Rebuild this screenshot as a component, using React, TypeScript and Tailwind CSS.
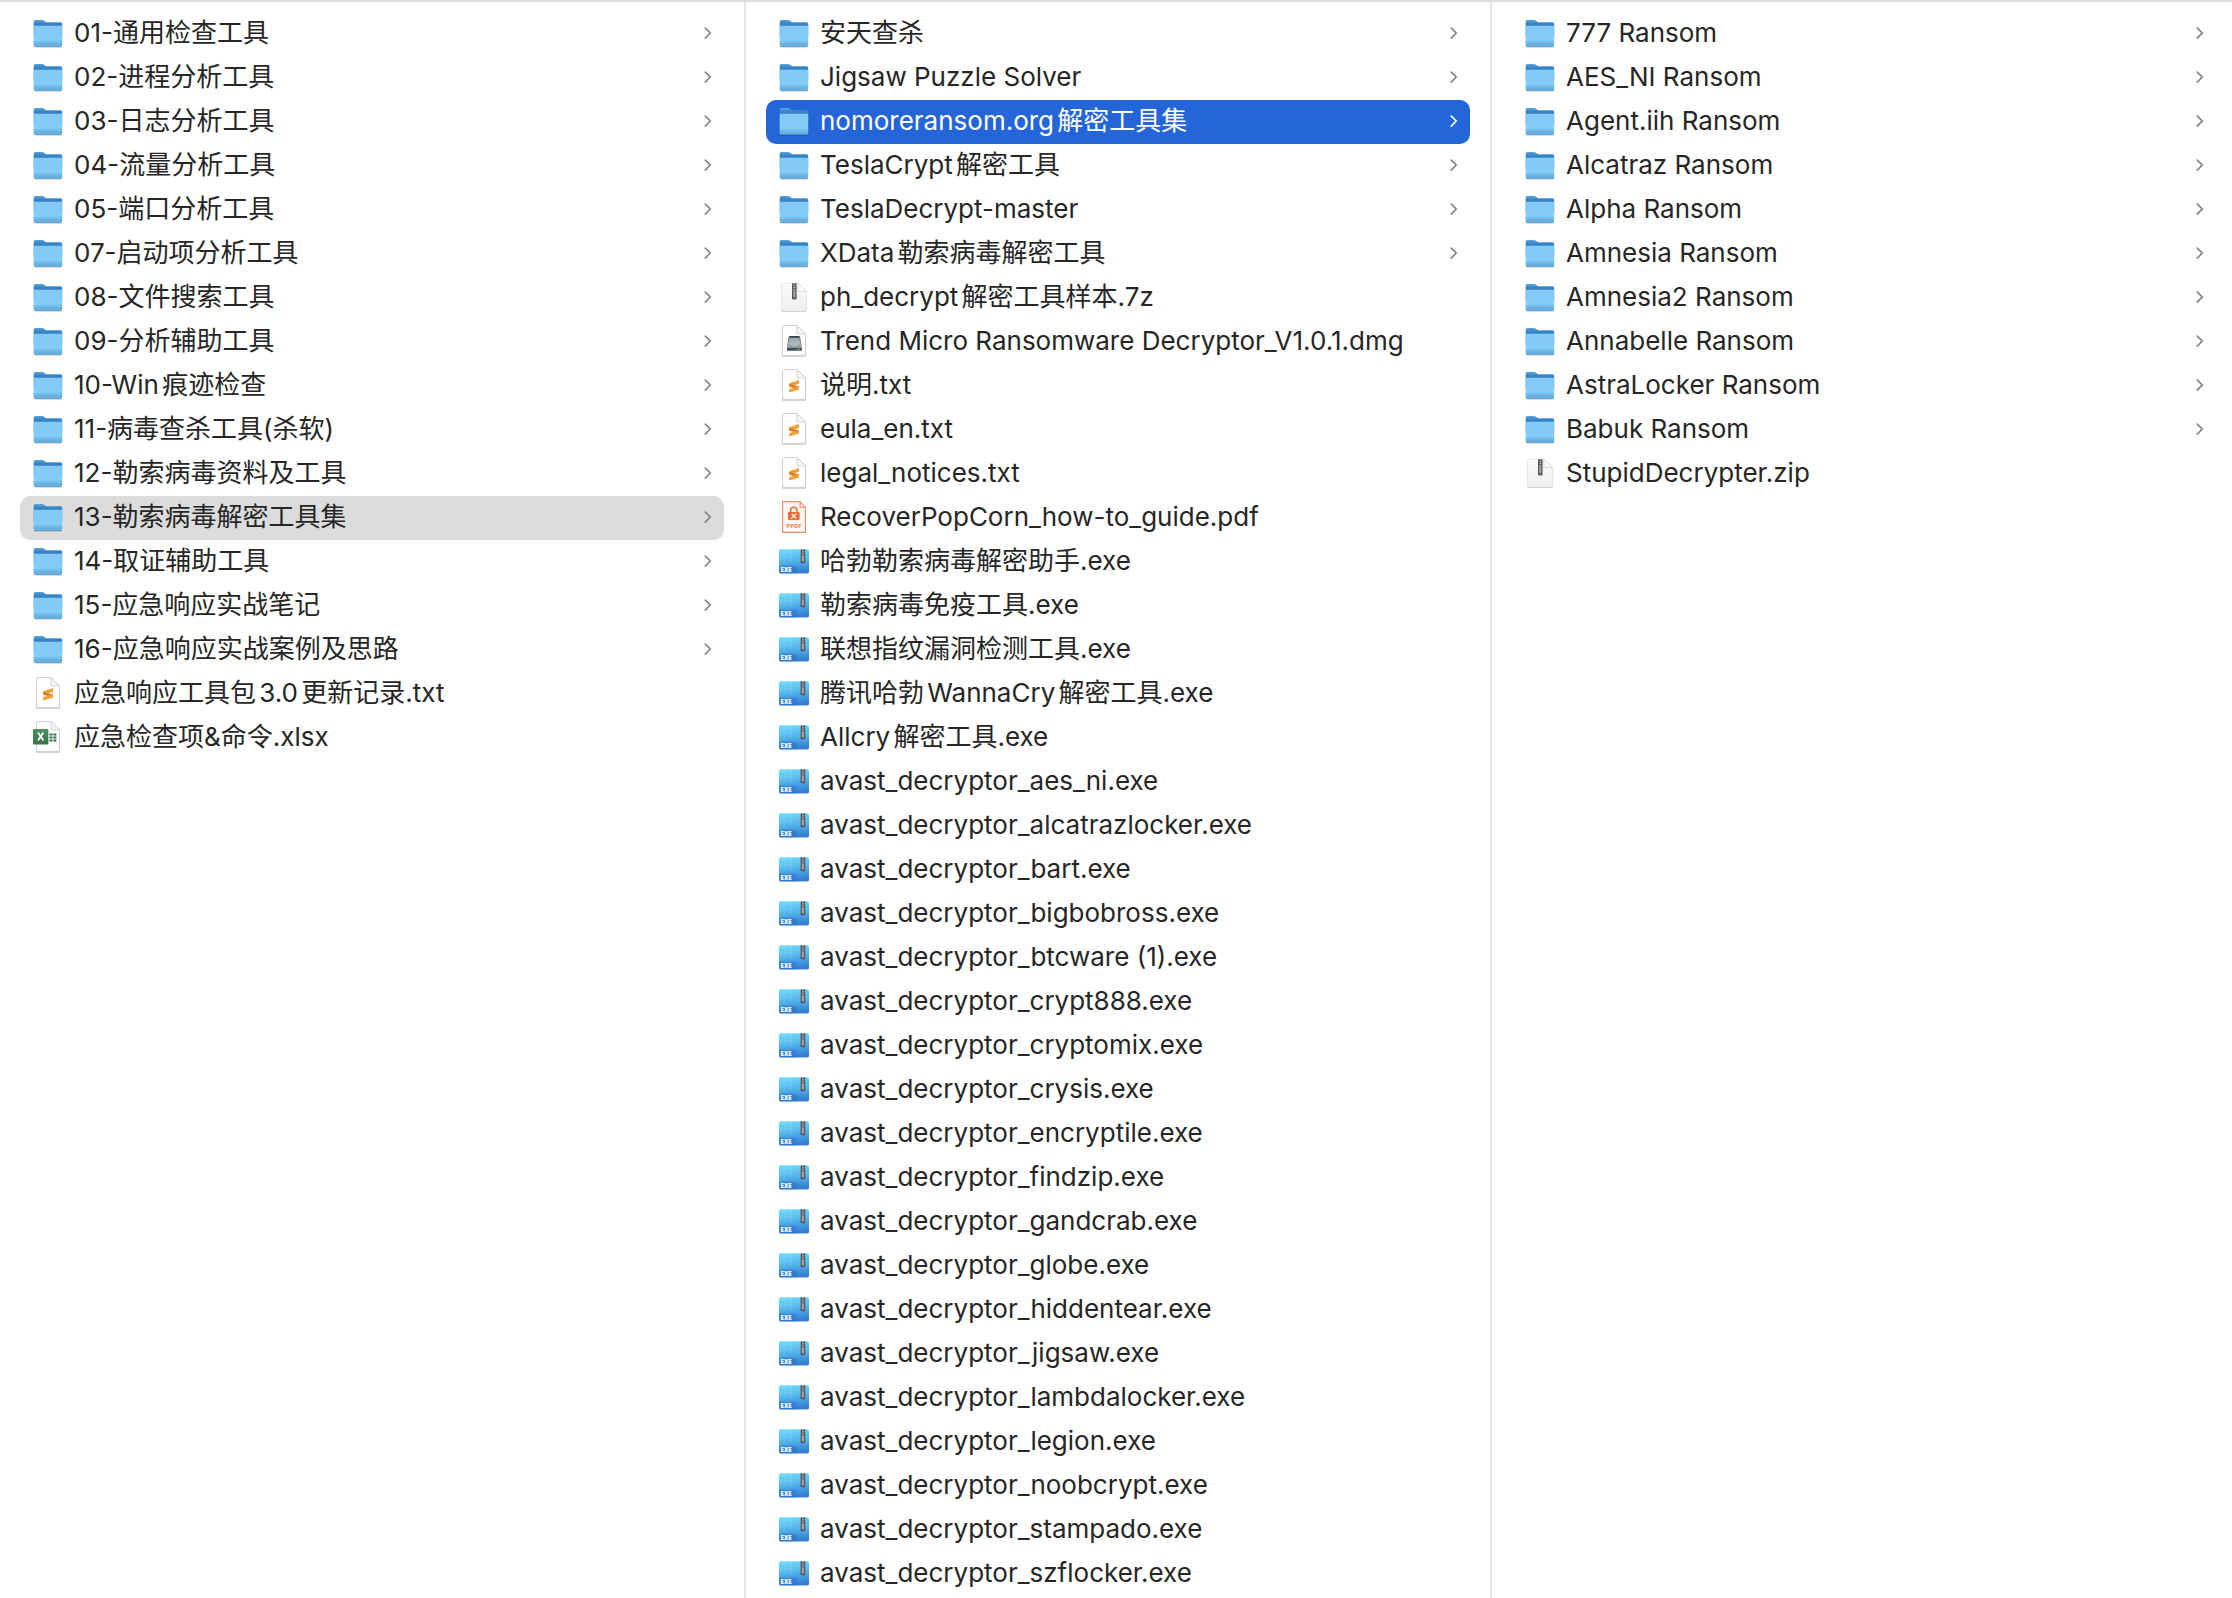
type Kind = "folder" | "zip" | "dmg" | "txt" | "pdf" | "exe" | "xlsx";

type Entry = {
  name: string;
  kind: Kind;
};

const folder = (name: string): Entry => ({ name, kind: "folder" });
const exe = (name: string): Entry => ({ name, kind: "exe" });

const toolkit: Entry[] = [
  folder("01-通用检查工具"),
  folder("02-进程分析工具"),
  folder("03-日志分析工具"),
  folder("04-流量分析工具"),
  folder("05-端口分析工具"),
  folder("07-启动项分析工具"),
  folder("08-文件搜索工具"),
  folder("09-分析辅助工具"),
  folder("10-Win痕迹检查"),
  folder("11-病毒查杀工具(杀软)"),
  folder("12-勒索病毒资料及工具"),
  folder("13-勒索病毒解密工具集"),
  folder("14-取证辅助工具"),
  folder("15-应急响应实战笔记"),
  folder("16-应急响应实战案例及思路"),
  { name: "应急响应工具包3.0更新记录.txt", kind: "txt" },
  { name: "应急检查项&命令.xlsx", kind: "xlsx" },
];

const decryptors: Entry[] = [
  folder("安天查杀"),
  folder("Jigsaw Puzzle Solver"),
  folder("nomoreransom.org解密工具集"),
  folder("TeslaCrypt解密工具"),
  folder("TeslaDecrypt-master"),
  folder("XData勒索病毒解密工具"),
  { name: "ph_decrypt解密工具样本.7z", kind: "zip" },
  { name: "Trend Micro Ransomware Decryptor_V1.0.1.dmg", kind: "dmg" },
  { name: "说明.txt", kind: "txt" },
  { name: "eula_en.txt", kind: "txt" },
  { name: "legal_notices.txt", kind: "txt" },
  { name: "RecoverPopCorn_how-to_guide.pdf", kind: "pdf" },
  exe("哈勃勒索病毒解密助手.exe"),
  exe("勒索病毒免疫工具.exe"),
  exe("联想指纹漏洞检测工具.exe"),
  exe("腾讯哈勃WannaCry解密工具.exe"),
  exe("Allcry解密工具.exe"),
  exe("avast_decryptor_aes_ni.exe"),
  exe("avast_decryptor_alcatrazlocker.exe"),
  exe("avast_decryptor_bart.exe"),
  exe("avast_decryptor_bigbobross.exe"),
  exe("avast_decryptor_btcware (1).exe"),
  exe("avast_decryptor_crypt888.exe"),
  exe("avast_decryptor_cryptomix.exe"),
  exe("avast_decryptor_crysis.exe"),
  exe("avast_decryptor_encryptile.exe"),
  exe("avast_decryptor_findzip.exe"),
  exe("avast_decryptor_gandcrab.exe"),
  exe("avast_decryptor_globe.exe"),
  exe("avast_decryptor_hiddentear.exe"),
  exe("avast_decryptor_jigsaw.exe"),
  exe("avast_decryptor_lambdalocker.exe"),
  exe("avast_decryptor_legion.exe"),
  exe("avast_decryptor_noobcrypt.exe"),
  exe("avast_decryptor_stampado.exe"),
  exe("avast_decryptor_szflocker.exe"),
];

const ransoms: Entry[] = [
  folder("777 Ransom"),
  folder("AES_NI Ransom"),
  folder("Agent.iih Ransom"),
  folder("Alcatraz Ransom"),
  folder("Alpha Ransom"),
  folder("Amnesia Ransom"),
  folder("Amnesia2 Ransom"),
  folder("Annabelle Ransom"),
  folder("AstraLocker Ransom"),
  folder("Babuk Ransom"),
  { name: "StupidDecrypter.zip", kind: "zip" },
];

// Gradients shared by every icon on the page
function IconDefs() {
  return (
    <svg className="absolute size-0" aria-hidden="true">
      <defs>
        <linearGradient id="folderBack" x1="0" y1="0" x2="0" y2="1">
          <stop offset="0" stopColor="#5aa5d8" />
          <stop offset="0.22" stopColor="#3583c6" />
          <stop offset="1" stopColor="#3583c6" />
        </linearGradient>
        <linearGradient id="folderFront" x1="0" y1="0" x2="0" y2="1">
          <stop offset="0" stopColor="#83cbf6" />
          <stop offset="0.78" stopColor="#83cbf8" />
          <stop offset="0.84" stopColor="#6db9ea" />
          <stop offset="1" stopColor="#6ab5e6" />
        </linearGradient>
        <linearGradient id="zipPage" x1="0" y1="0" x2="0" y2="1">
          <stop offset="0" stopColor="#fafafa" />
          <stop offset="1" stopColor="#efefef" />
        </linearGradient>
        <linearGradient id="exeBody" x1="0" y1="0" x2="0.15" y2="1">
          <stop offset="0" stopColor="#74def9" />
          <stop offset="0.5" stopColor="#55b6ed" />
          <stop offset="1" stopColor="#3580d6" />
        </linearGradient>
        <linearGradient id="drive" x1="0" y1="0" x2="0" y2="1">
          <stop offset="0" stopColor="#5d666b" />
          <stop offset="0.7" stopColor="#98a3a8" />
          <stop offset="1" stopColor="#6d7579" />
        </linearGradient>
        <linearGradient id="sheet" x1="0" y1="0" x2="0" y2="1">
          <stop offset="0" stopColor="#4a9168" />
          <stop offset="1" stopColor="#35743f" />
        </linearGradient>
      </defs>
    </svg>
  );
}

function Page() {
  return (
    <>
      <path d="M5.5 1.2H19.5L27.5 9.4V30.8H4.5V2.2Q4.5 1.2 5.5 1.2Z" transform="translate(0 0.6)" fill="none" stroke="#000" strokeOpacity="0.18" />
      <path d="M5.5 0.6H19L27.5 9V30.4H4.5V1.6Q4.5 0.6 5.5 0.6Z" fill="#fff" stroke="#cfcfcf" />
      <path d="M19 0.6L27.5 9H20Q19 9 19 8Z" fill="#f6f6f6" stroke="#cfcfcf" strokeWidth="0.9" />
    </>
  );
}

function Zipper({ x, y, h }: { x: number; y: number; h: number }) {
  return (
    <>
      <rect x={x} y={y} width="4.6" height={h} rx="0.8" fill="#5a5a5c" />
      <path d={`M${x + 2.3} ${y}V${y + h * 0.45}`} stroke="#c9c9c9" strokeWidth="1.6" strokeDasharray="1 1" />
      <rect x={x + 1.3} y={y + h * 0.45} width="2" height={h * 0.42} fill="#a7a7a9" />
    </>
  );
}

function EntryIcon({ kind }: { kind: Kind }) {
  return (
    <svg viewBox="0 0 32 34" className="h-[34px] w-8 shrink-0" aria-hidden="true">
      {kind === "folder" && (
        <>
          <rect x="2" y="10" width="28" height="20.6" rx="1.6" fill="#000" fillOpacity="0.25" />
          <path d="M1.7 4.6Q1.7 3 3.3 3H10.2Q11.2 3 12 3.7L13.4 4.8Q14 5.3 15 5.3H28.6Q30.2 5.3 30.2 6.9V20H1.7Z" fill="url(#folderBack)" />
          <path d="M1.7 9.9Q1.7 8.8 2.8 8.8H29.1Q30.2 8.8 30.2 9.9V28Q30.2 29.6 28.6 29.6H3.3Q1.7 29.6 1.7 28Z" fill="url(#folderFront)" />
          <path d="M1.7 24.9H30.2M1.7 27.2H30.2" stroke="#5aa6d8" strokeWidth="0.6" />
          <path d="M2.4 29.4H29.4" stroke="#4f93c2" strokeWidth="0.7" />
        </>
      )}
      {kind === "zip" && (
        <>
          <path d="M5.2 2.6H19.8L28.4 10.5V29.4Q28.4 30.9 26.9 30.9H5.2Q3.7 30.9 3.7 29.4V4.1Q3.7 2.6 5.2 2.6Z" fill="#000" fillOpacity="0.22" />
          <path d="M5 2H20L28.6 10.4V28.6Q28.6 30.2 27 30.2H5Q3.4 30.2 3.4 28.6V3.6Q3.4 2 5 2Z" fill="url(#zipPage)" stroke="#dedede" strokeWidth="0.6" />
          <path d="M20 2L28.6 10.4H21.4Q20 10.4 20 9Z" fill="#fdfdfd" stroke="#d0d0d0" strokeWidth="0.8" />
          <Zipper x={14} y={2} h={16.4} />
        </>
      )}
      {kind === "dmg" && (
        <>
          <Page />
          <path d="M11.6 11H21.2Q22 11 22.2 12L23.8 21.5V25.4H9V21.5L10.6 12Q10.8 11 11.6 11Z" fill="url(#drive)" />
          <path d="M12 11H21V12.6H12Z" fill="#3b4043" />
          <path d="M11.6 13H21.2L22.2 19.5Q16.4 22.4 10.6 19.5Z" fill="#b8c4c9" fillOpacity="0.7" />
          <path d="M9 23H23.8V25.6H9Z" fill="#4a5154" />
          <path d="M19 24.3H22" stroke="#6fa08a" strokeWidth="1" />
        </>
      )}
      {kind === "txt" && (
        <>
          <Page />
          <path d="M21 11L11.2 14.2V17.8L21 15Z" fill="#f2a03c" />
          <path d="M11.2 14.8L21 17.6V20.6L11.2 17.8Z" fill="#dd7f24" />
          <path d="M21 17.2V20.4L11.2 23.6V20Z" fill="#f2a03c" />
        </>
      )}
      {kind === "xlsx" && (
        <>
          <Page />
          <g fill="#2f6b46">
            <path d="M17.5 12.4h3v2h-3zM21.4 12.4h3v2h-3zM17.5 15.4h3v2h-3zM21.4 15.4h3v2h-3zM17.5 18.4h3v2h-3zM21.4 18.4h3v2h-3z" />
          </g>
          <rect x="1" y="8" width="15.4" height="15.4" rx="1" fill="url(#sheet)" />
          <path d="M6 11.6L11.4 19.6M11.4 11.6L6 19.6" stroke="#fff" strokeWidth="1.8" />
        </>
      )}
      {kind === "pdf" && (
        <>
          <path d="M4.6 0.6H22L27.4 6.2V31.4H4.6Z" fill="#fffaf6" stroke="#ee8c5c" strokeWidth="1.1" />
          <path d="M22 0.6V6.2H27.4" fill="none" stroke="#ee8c5c" strokeWidth="1.1" />
          <path d="M12.6 11.5V9.4A3.2 3.2 0 0 1 19 9.4V11.5" fill="none" stroke="#ee6a35" strokeWidth="1.6" />
          <rect x="10" y="11" width="11.6" height="8" rx="1" fill="#ee6a35" />
          <path d="M13 17.6L18.6 12.6M13.8 13L18 17.4" stroke="#fff" strokeWidth="1.2" />
          <text x="16" y="27" textAnchor="middle" className="fill-[#ee7a48] font-['Roboto',sans-serif] text-[6px] font-bold">PPDF</text>
        </>
      )}
      {kind === "exe" && (
        <>
          <rect x="1" y="4.2" width="30" height="24.2" rx="1.6" fill="url(#exeBody)" />
          <path d="M1 12H15M6.2 4.2V17M13.2 4.2V17" stroke="#a5ecfb" strokeOpacity="0.4" strokeWidth="0.5" />
          <path d="M1 20.4H16.5L19 22.8V28.4H2.6Q1 28.4 1 26.8Z" fill="#1d66b3" fillOpacity="0.3" />
          <Zipper x={22.6} y={4.2} h={14} />
          <text x="2.6" y="26.8" className="fill-white font-['Open_Sans',sans-serif] text-[6px] font-extrabold">EXE</text>
        </>
      )}
    </svg>
  );
}

function Chevron() {
  return (
    <svg viewBox="0 0 8 14" className="h-3.5 w-2 shrink-0" fill="none" stroke="currentColor" strokeWidth="1.6" aria-hidden="true">
      <path d="M0.8 0.6L6.2 6L0.8 11.6" />
    </svg>
  );
}

function Column({ label, entries, selected, active, className }: { label: string; entries: Entry[]; selected?: string; active?: boolean; className: string }) {
  return (
    <section aria-label={label} className={`min-w-0 flex-1 pt-2.5 pl-5 ${className}`}>
      <ul>
        {entries.map((entry) => {
          const isSelected = entry.name === selected;
          const tone = !isSelected
            ? "text-[#262626]"
            : active
              ? "bg-[#2465da] text-white"
              : "bg-[#dcdcdc] text-[#262626]";
          return (
            <li key={entry.name}>
              <button type="button" aria-current={isSelected} className={`flex h-11 w-full items-center gap-2.5 rounded-[10px] px-3 text-left ${tone}`}>
                <EntryIcon kind={entry.kind} />
                <span className="min-w-0 flex-1 truncate pb-0.5 leading-[42px]">{entry.name}</span>
                {entry.kind === "folder" && (
                  <span className={isSelected && active ? "text-white" : "text-[#808080]"}>
                    <Chevron />
                  </span>
                )}
              </button>
            </li>
          );
        })}
      </ul>
    </section>
  );
}

export default function App() {
  return (
    <main className="flex h-screen overflow-hidden border-t-2 border-[#dcdcdc] bg-white font-['Inter','Noto_Sans_CJK_SC',sans-serif] text-[26px] [text-autospace:normal]">
      <IconDefs />
      <Column label="应急响应工具包" entries={toolkit} selected="13-勒索病毒解密工具集" className="border-r-2 border-[#e4e4e4] pr-5" />
      <Column label="13-勒索病毒解密工具集" entries={decryptors} selected="nomoreransom.org解密工具集" active className="border-r-2 border-[#e4e4e4] pr-5" />
      <Column label="nomoreransom.org解密工具集" entries={ransoms} className="pr-4" />
    </main>
  );
}
